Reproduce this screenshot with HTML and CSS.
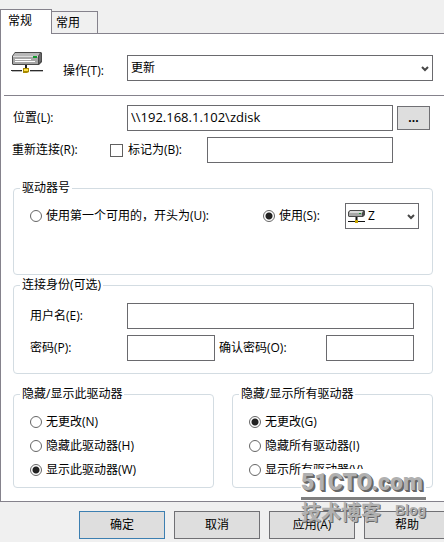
FILE: index.html
```html
<!DOCTYPE html>
<html lang="zh-CN">
<head>
    <meta charset="UTF-8">
    <meta name="viewport" content="width=device-width, initial-scale=1.0">
    <title>驱动器映射</title>
    <link rel="stylesheet" href="styles.css">
</head>
<body>
    <!-- Shared icons -->
    <svg class="sprite" aria-hidden="true">
        <symbol id="drive" viewBox="0 0 32 24">
            <path d="M4 2H30L31 3V12L28 15H2L1 14V6Z" fill="#4a4a4a"/>
            <path d="M4 3H29L27 6H2Z" fill="#b8b8b8"/>
            <path d="M2 6H27V14H2Z" fill="#a6a6a6"/>
            <path d="M29 3L30 4V11L28 13V6Z" fill="#6a6a6a"/>
            <path d="M4 9.500H20M4 11.500H24" stroke="#fff"/>
            <path d="M2 6.500H27" stroke="#dcdcdc"/>
            <path d="M22 6H26V8H22Z" fill="#109a2c"/>
            <path d="M15 15V19" stroke="#222" stroke-width="2"/>
            <path d="M0 20.500H11M19 20.500H32" stroke="#2c2c2c"/>
            <path d="M1 21.500H11M19 21.500H32" stroke="#b8b8b8"/>
            <path d="M12 18H18V22L16 23H12Z" fill="#a88a00"/>
            <path d="M13 19H17V21H13Z" fill="#ffe24a"/>
        </symbol>
        <symbol id="drive-mini" viewBox="0 0 17 14">
            <path d="M2 0H16L17 1V5L15 7H1L0 6V2Z" fill="#4a4a4a"/>
            <path d="M2 1H15L14 3H1Z" fill="#d8d8d8"/>
            <path d="M1 3H14V6H1Z" fill="#a6a6a6"/>
            <path d="M11 3H13V4H11Z" fill="#109a2c"/>
            <path d="M8.500 7V11" stroke="#111" stroke-width="2"/>
            <path d="M0 11.500H17" stroke="#111"/>
            <path d="M7 10H10V13H7Z" fill="#c7a500"/>
        </symbol>
        <symbol id="chevron" viewBox="0 0 8 6">
            <path d="M1 1L4 4L7 1" fill="none" stroke="#484848" stroke-width="2"/>
        </symbol>
    </svg>

    <!-- Tabs -->
    <div class="tabs" role="tablist">
        <button type="button" class="tab active" role="tab" aria-selected="true">常规</button>
        <button type="button" class="tab" role="tab" aria-selected="false">常用</button>
    </div>

    <form id="driveForm">
        <div class="panel">
            <div class="action-row">
                <svg class="drive-icon"><use href="#drive"/></svg>
                <label for="action">操作(T):</label>
                <div class="select-box">
                    <select id="action"><option>更新</option></select>
                    <svg class="chevron"><use href="#chevron"/></svg>
                </div>
            </div>
            <hr>

            <div class="row">
                <label class="row-label" for="location">位置(L):</label>
                <input class="grow" type="text" id="location" value="\\192.168.1.102\zdisk">
                <button type="button" class="btn browse">...</button>
            </div>
            <div class="row">
                <label class="row-label short" for="reconnect">重新连接(R):</label>
                <input type="checkbox" id="reconnect">
                <label class="mark-label" for="mark">标记为(B):</label>
                <input class="grow" type="text" id="mark">
                <span class="browse"></span>
            </div>

            <!-- Drive letter -->
            <fieldset class="letter">
                <legend>驱动器号</legend>
                <div class="letter-row">
                    <label class="option grow"><input type="radio" name="letter">使用第一个可用的，开头为(U):</label>
                    <label class="option use"><input type="radio" name="letter" checked>使用(S):</label>
                    <div class="select-box drive-select">
                        <svg class="drive-small"><use href="#drive-mini"/></svg>
                        <select aria-label="使用"><option>Z</option></select>
                        <svg class="chevron"><use href="#chevron"/></svg>
                    </div>
                </div>
            </fieldset>

            <!-- Connect as -->
            <fieldset class="account">
                <legend>连接身份(可选)</legend>
                <div class="account-row">
                    <label class="account-label" for="user">用户名(E):</label>
                    <input class="grow" type="text" id="user">
                </div>
                <div class="account-row">
                    <label class="account-label" for="password">密码(P):</label>
                    <input class="grow" type="password" id="password">
                    <label class="confirm-label" for="confirm">确认密码(O):</label>
                    <input class="grow" type="password" id="confirm">
                </div>
            </fieldset>

            <!-- Hide / show -->
            <div class="visibility">
                <fieldset>
                    <legend>隐藏/显示此驱动器</legend>
                    <label class="option"><input type="radio" name="thisDrive">无更改(N)</label>
                    <label class="option"><input type="radio" name="thisDrive">隐藏此驱动器(H)</label>
                    <label class="option"><input type="radio" name="thisDrive" checked>显示此驱动器(W)</label>
                </fieldset>
                <fieldset>
                    <legend>隐藏/显示所有驱动器</legend>
                    <label class="option"><input type="radio" name="allDrives" checked>无更改(G)</label>
                    <label class="option"><input type="radio" name="allDrives">隐藏所有驱动器(I)</label>
                    <label class="option"><input type="radio" name="allDrives">显示所有驱动器(V)</label>
                </fieldset>
            </div>
        </div>

        <div class="actions">
            <button type="submit" class="btn primary">确定</button>
            <button type="button" class="btn">取消</button>
            <button type="button" class="btn">应用(A)</button>
            <button type="button" class="btn">帮助</button>
        </div>
    </form>

    <div class="watermark">
        <div class="watermark-site">51CTO.com</div>
        <div class="watermark-sub"><span>技术博客</span><span class="blog">Blog</span></div>
    </div>
</body>
</html>
```
FILE: styles.css
```css
* {
    box-sizing: border-box;
}

body {
    position: relative;
    margin: 0;
    padding-top: 9px;
    overflow: hidden;
    background: #f0f0f0;
    color: #000;
    font-family: "Open Sans", "Noto Sans CJK SC", sans-serif;
    font-size: 12px;
    line-height: 16px;
}

button, input, select {
    margin: 0;
    font: inherit;
    color: inherit;
}

.sprite {
    display: none;
}

/* Tabs */
.tabs {
    display: flex;
    align-items: flex-end;
}

.tab {
    height: 22px;
    padding: 0 17px 0 4px;
    border: 1px solid #85828c;
    border-left: 0;
    border-bottom: 0;
    background: #f0f0f0;
}

.tab.active {
    position: relative;
    height: 25px;
    margin-bottom: -1px;
    padding: 0 19px 2px 7px;
    border-left: 1px solid #85828c;
    background: #fff;
}

/* Panel */
.panel {
    padding: 16px 0 13px;
    border: 1px solid #85828c;
    border-right: 0;
    background: #fff;
}

.action-row {
    display: flex;
    align-items: flex-end;
    height: 31px;
    padding: 0 11px 0 10px;
}

.action-row label {
    width: 64px;
    line-height: 20px;
}

.drive-icon {
    align-self: flex-start;
    width: 32px;
    height: 24px;
    margin-right: 20px;
}

hr {
    margin: 14px 0 9px 3px;
    border: 0;
    border-top: 1px solid #85828c;
}

.row {
    display: flex;
    align-items: center;
    margin-bottom: 6px;
    padding: 0 14px 0 12px;
}

.row-label {
    width: 114px;
}

.row-label.short {
    width: 98px;
    margin-left: -1px;
}

.mark-label {
    width: 79px;
    margin-left: 5px;
}

.grow {
    flex: 1;
    min-width: 0;
}

input[type="text"], input[type="password"], select {
    height: 26px;
    padding: 0 3px;
    border: 1px solid #6a6a6e;
    border-radius: 0;
    background: #fff;
    outline: none;
}

input[type="text"] {
    padding-bottom: 2px;
    font-size: 13px;
}

input[type="checkbox"] {
    appearance: none;
    width: 13px;
    height: 13px;
    border: 1px solid #606060;
    background: #fff;
}

input[type="radio"] {
    appearance: none;
    width: 12px;
    height: 12px;
    margin-right: 4px;
    border: 1px solid #666;
    border-radius: 50%;
    background: #fff;
}

input[type="radio"]:checked {
    background: radial-gradient(circle, #222 3px, #fff 4px);
}

.select-box {
    position: relative;
    flex: 1;
}

.select-box select {
    display: block;
    width: 100%;
    appearance: none;
}

.chevron {
    position: absolute;
    top: 11px;
    right: 4px;
    width: 8px;
    height: 6px;
    pointer-events: none;
}

.btn {
    height: 28px;
    padding: 0;
    border: 1px solid #707074;
    border-radius: 0;
    background: #dedede;
}

.browse {
    width: 33px;
    margin-left: 4px;
}

.btn.browse {
    height: 24px;
    font-weight: bold;
}

/* Groups */
fieldset {
    min-width: 0;
    margin: 0;
    padding: 0 6px;
    border: 1px solid #d3dce2;
    border-radius: 4px;
}

legend {
    padding: 0 2px;
    line-height: 16px;
}

.option {
    display: flex;
    align-items: center;
}

.letter {
    margin: 17px 11px 2px 12px;
    padding-bottom: 45px;
}

.letter-row {
    display: flex;
    align-items: center;
    padding: 7px 7px 0 10px;
}

.use {
    width: 82px;
}

.drive-select {
    flex: none;
    width: 74px;
}

.drive-select select {
    padding-left: 22px;
}

.drive-small {
    position: absolute;
    top: 7px;
    left: 3px;
    width: 17px;
    height: 14px;
}

.account {
    margin: 0 11px 12px 12px;
    padding: 10px 18px 12px 6px;
}

.account-row {
    display: flex;
    align-items: center;
    padding-left: 10px;
}

.account-row + .account-row {
    margin-top: 6px;
}

.account-label {
    width: 97px;
}

.confirm-label {
    width: 107px;
    margin-left: 4px;
}

.visibility {
    display: grid;
    grid-template-columns: 1fr 1fr;
    gap: 18px;
    margin: 0 11px 0 12px;
}

.visibility fieldset {
    padding: 8px 6px 5px;
}

.visibility .option {
    height: 24px;
    padding-left: 10px;
}

/* Dialog buttons */
.actions {
    display: flex;
    gap: 9px;
    padding: 9px 0 3px 79px;
}

.actions .btn {
    flex: none;
    width: 86px;
}

.btn.primary {
    border-color: #3c7fb1;
}

/* Watermark */
.watermark {
    position: absolute;
    right: 18px;
    bottom: 16px;
    width: 125px;
    color: #b0b0b0;
    font-weight: bold;
    text-shadow: 1px 1px 0 #686868;
    pointer-events: none;
}

.watermark-site {
    border-bottom: 3px solid #808080;
    background: #fff;
    font-family: Roboto, "Liberation Sans", sans-serif;
    font-size: 23px;
    font-weight: 900;
    line-height: 28px;
    text-shadow: 1px 1px 0 #686868, 2px 2px 0 #686868;
}

.watermark-sub {
    display: flex;
    justify-content: space-between;
    font-size: 20px;
    line-height: 26px;
}

.blog {
    font-family: "Liberation Sans", sans-serif;
    font-size: 14px;
    line-height: 20px;
}
```
